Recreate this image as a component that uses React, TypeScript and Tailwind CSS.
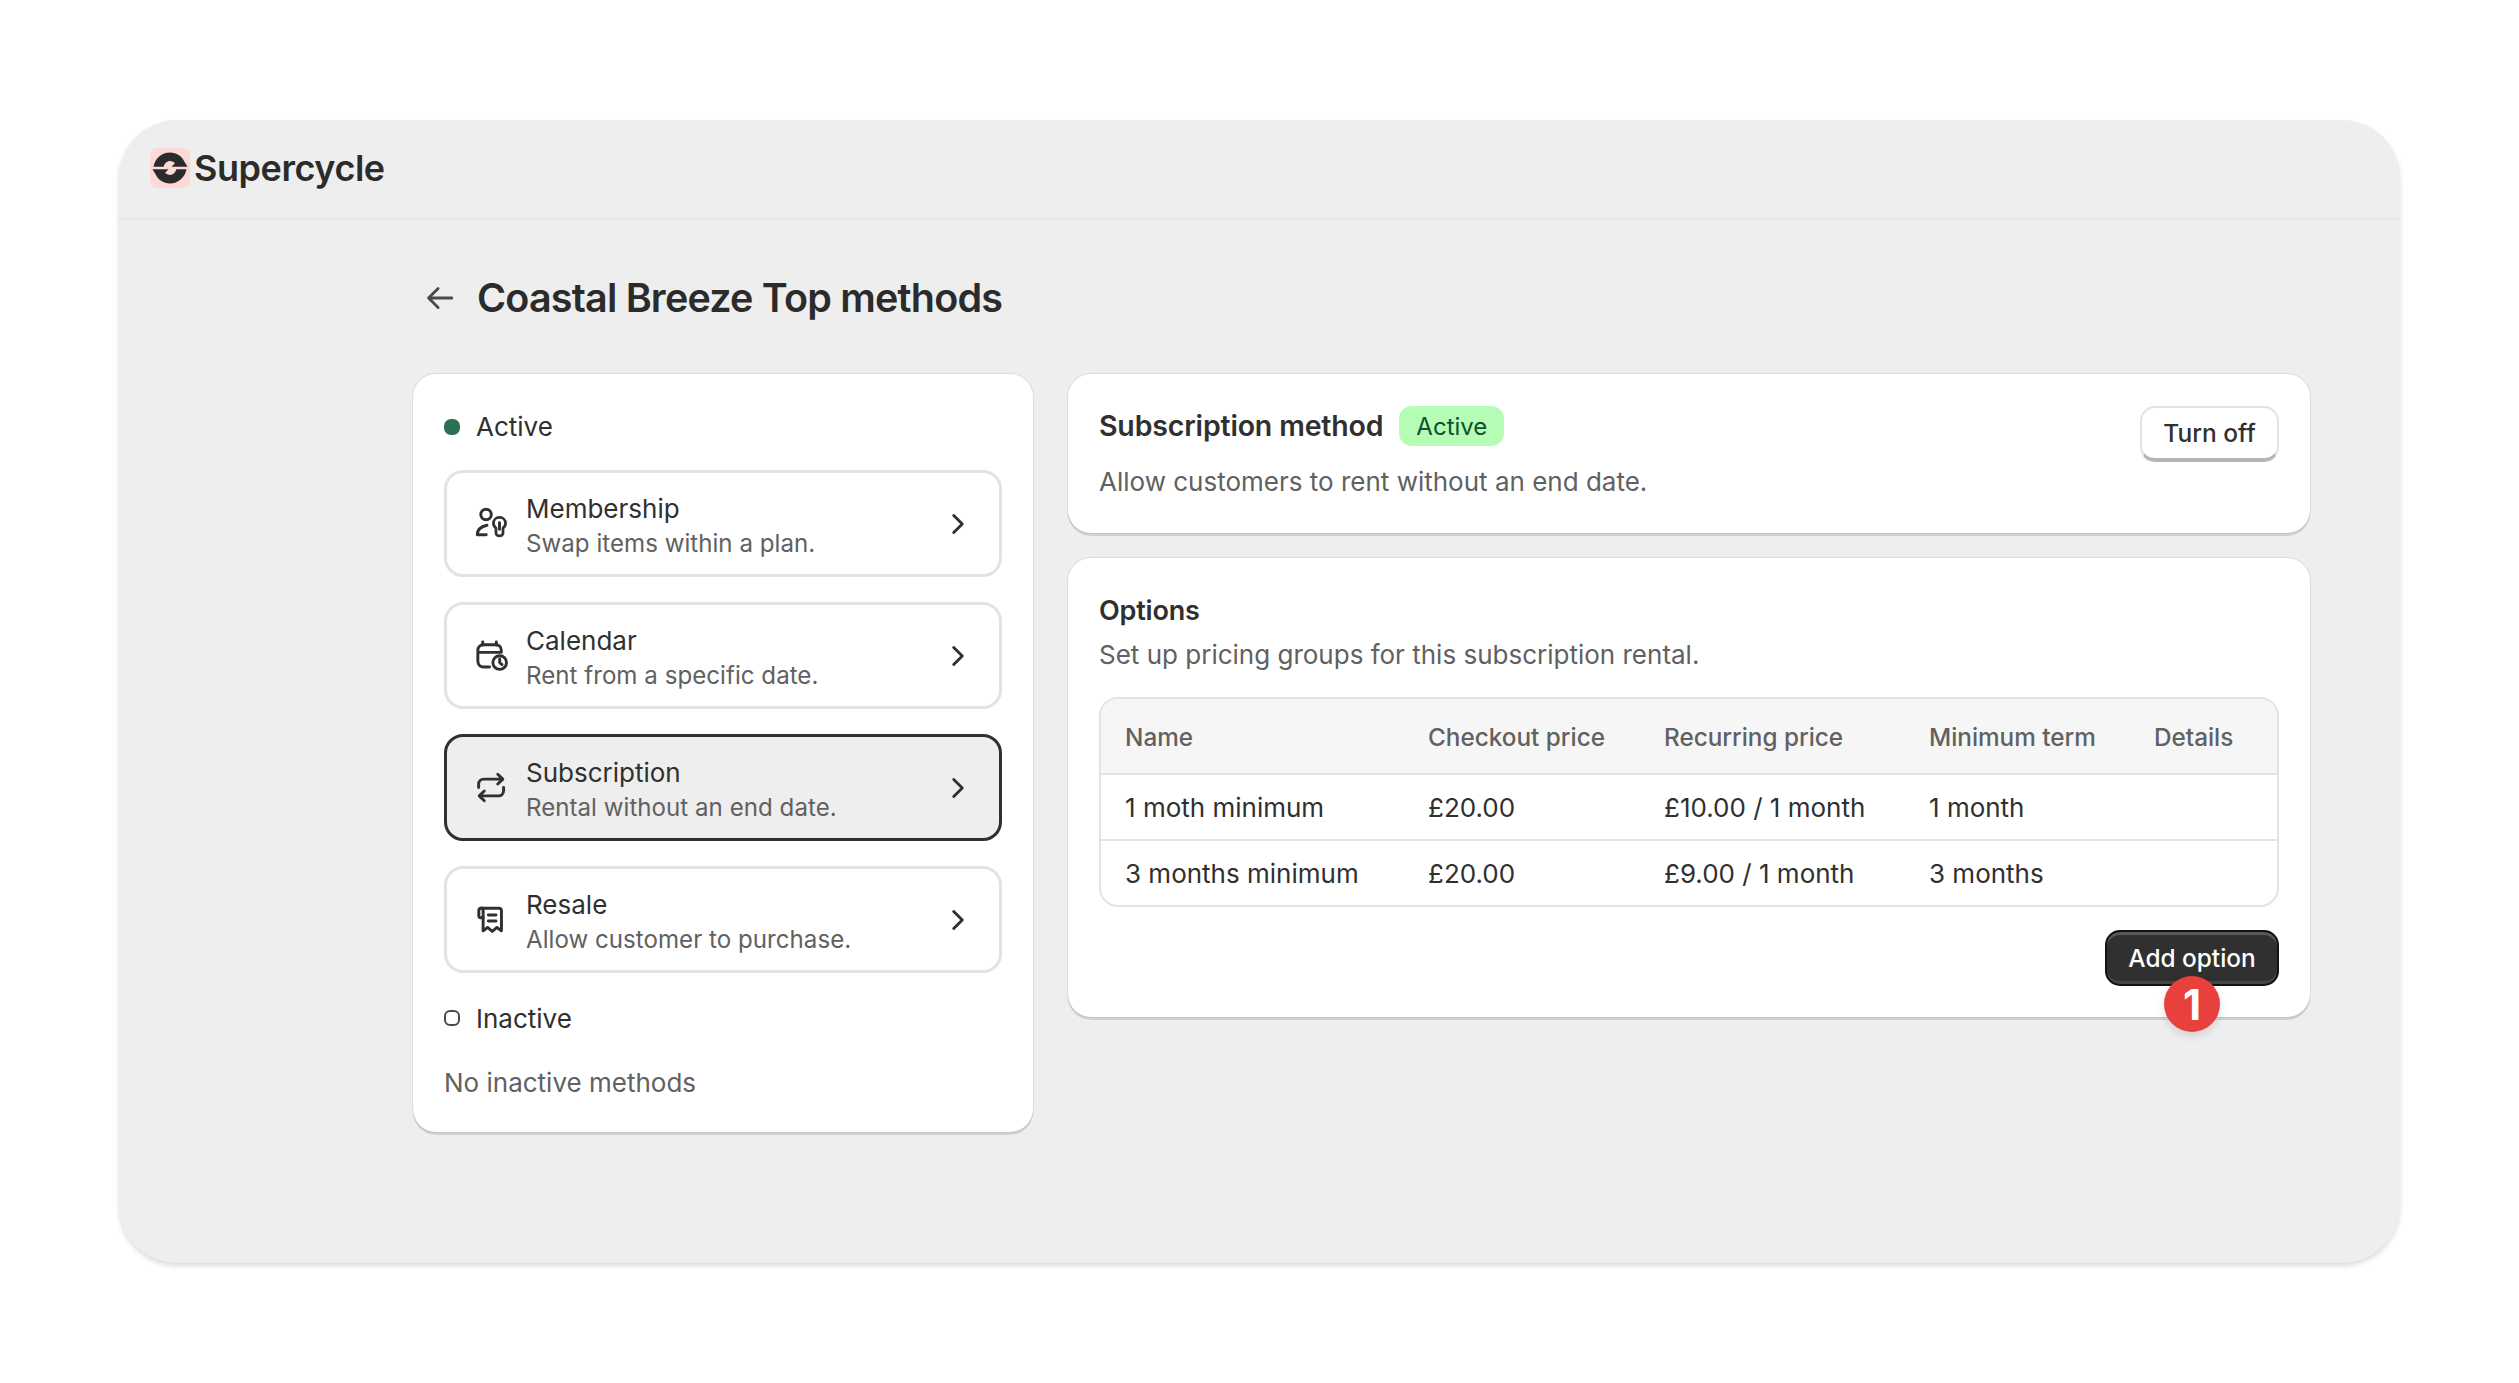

const Chevron = () => (
  <svg viewBox="0 0 20 20" className="w-[38px] h-[38px] shrink-0" fill="none" stroke="#303030" strokeWidth="1.5" strokeLinecap="round" strokeLinejoin="round">
    <path d="M7.75 5.5 12.25 10l-4.5 4.5" />
  </svg>
);

const icons: Record<string, JSX.Element> = {
  membership: (
    <>
      <circle cx="7.2" cy="5.4" r="2.7" />
      <path d="M2.7 15.8h4.6M2.7 15.8c0-2.6 1.7-4.2 5-4.9" />
      <path d="M14.1 6.9c-1.8 0-3.1 1.3-3.1 3 0 1.1.5 1.9 1.3 2.5v2.6c0 .7.8 1.4 1.8 1.4s1.8-.7 1.8-1.4v-2.6c.8-.6 1.3-1.4 1.3-2.5 0-1.7-1.3-3-3.1-3Z" strokeWidth="1.4" />
      <path d="M14.1 9.6v3.4" />
    </>
  ),
  calendar: (
    <>
      <path d="M5.5 3v1.6M12.5 3v1.6" />
      <path d="M9 15.9H6c-1.8 0-3-1.1-3-2.9V7.4c0-1.7 1.2-2.9 3-2.9h6.2c1.6 0 2.8 1.1 2.8 2.7v1M3.2 8.4H15" />
      <circle cx="14.2" cy="13.6" r="3.5" fill="#fff" />
      <path d="M14.2 11.8v1.9l1.2 1" />
    </>
  ),
  subscription: (
    <>
      <path d="M3.4 10V8.3c0-1.5 1.2-2.6 2.6-2.6h9.6" />
      <path d="M13.2 3.2 15.8 5.7 13.2 8.2" />
      <path d="M16.2 10v1.7c0 1.5-1.2 2.6-2.6 2.6H3.9" />
      <path d="M6.3 11.8 3.7 14.3l2.6 2.5" />
    </>
  ),
  resale: (
    <>
      <path d="M5.6 4.2h-1c-.7 0-1.1.4-1.1 1v2.9c0 .6.4 1 1 1h1.2" />
      <path d="M4.6 4.2h9.2c.8 0 1.3.5 1.3 1.2v10.4l-2.3-1.7-2.4 2-2.4-2-2.3 1.7V5.2c0-.6-.4-1-1.1-1Z" />
      <path d="M8.4 7.7h3.9M8.4 10.8h3.9" />
    </>
  ),
};

const Icon = ({ name }: { name: string }) => (
  <svg viewBox="0 0 20 20" className="w-[39px] h-[39px] shrink-0" fill="none" stroke="#303030" strokeWidth="1.5" strokeLinecap="round" strokeLinejoin="round">
    {icons[name]}
  </svg>
);

const Method = ({ icon, title, sub, active }: { icon: string; title: string; sub: string; active?: boolean }) => (
  <div
    className={
      "h-[107px] rounded-[19px] flex items-center pl-[25px] pr-[22px] " +
      (active ? "bg-[#eeeeee] border-[3px] border-[#303030]" : "bg-white border-[3px] border-[#e3e3e3]")
    }
  >
    <Icon name={icon} />
    <div className="ml-[15px] flex-1 pt-[6px]">
      <div className="text-[26px] leading-[35px] text-[#303030]">{title}</div>
      <div className="text-[24.1px] leading-[36px] text-[#616161] tracking-[0.03px]">{sub}</div>
    </div>
    <Chevron />
  </div>
);

const cardClass =
  "bg-white rounded-[23px] shadow-[0_3px_0_0_rgba(26,26,26,0.13),0_0_0_1px_rgba(204,204,204,0.5)]";

const rows = [
  ["1 moth minimum", "£20.00", "£10.00 / 1 month", "1 month"],
  ["3 months minimum", "£20.00", "£9.00 / 1 month", "3 months"],
];

const gridCols = "grid grid-cols-[303px_236px_265px_225px_1fr] items-center pl-[24px]";

export default function App() {
  return (
    <div className="min-h-screen bg-white pt-[120px] pl-[119px] font-['Inter',sans-serif] text-[26px] text-[#303030]">
      <div className="w-[2281px] h-[1143px] rounded-[58px] bg-[#eeeeee] shadow-[0_3px_5px_rgba(0,0,0,0.14)] overflow-hidden">
        <header className="h-[100px] border-b-[2px] border-[#e8e8e8] flex items-center pl-[31px]">
          <div className="w-[40px] h-[40px] rounded-[7px] bg-[#fcd9d7] flex items-center justify-center -mt-[2px]">
            <svg viewBox="0 0 40 40" className="w-[40px] h-[40px]">
              <g fill="#2b2b2b">
                <path d="M3.5 18.7C5 10.5 11.8 4.5 20 4.5c6.4 0 11.8 3.6 14.3 8.9l3.2 5.3H21.5l3.4-3.4c-1.3-1.4-3-2.2-4.9-2.2-3 0-5.5 2.3-6.3 5.6Z" />
                <path d="M3.5 18.7C5 10.5 11.8 4.5 20 4.5c6.4 0 11.8 3.6 14.3 8.9l3.2 5.3H21.5l3.4-3.4c-1.3-1.4-3-2.2-4.9-2.2-3 0-5.5 2.3-6.3 5.6Z" transform="rotate(180 20 20)" />
              </g>
            </svg>
          </div>
          <span className="ml-[4px] -mt-[3px] text-[36px] font-semibold tracking-[-0.45px] text-[#2b2b2b]">Supercycle</span>
        </header>

        <main className="pl-[294px] pr-[90px] pt-[55px]">
          <div className="flex items-center h-[48px] mb-[51px]">
            <svg viewBox="0 0 20 20" className="w-[38px] h-[38px] ml-[8px] -mt-[2px]" fill="none" stroke="#4a4a4a" strokeWidth="1.5" strokeLinecap="round" strokeLinejoin="round">
              <path d="M16.2 10H4M9 5 4 10l5 5" />
            </svg>
            <h1 className="ml-[18px] text-[39.5px] font-semibold tracking-[-0.8px] text-[#2b2b2b]">Coastal Breeze Top methods</h1>
          </div>

          <div className="flex items-start gap-[35px]">
            <section className={cardClass + " w-[620px] h-[758px] p-[31px] pt-[30px]"}>
              <div className="flex items-center h-[42px] mb-[24px] pt-[3px]">
                <span className="w-[16px] h-[16px] rounded-[7px] bg-[#2a7052]" />
                <span className="ml-[16px]">Active</span>
              </div>
              <div className="flex flex-col gap-[25px]">
                <Method icon="membership" title="Membership" sub="Swap items within a plan." />
                <Method icon="calendar" title="Calendar" sub="Rent from a specific date." />
                <Method icon="subscription" title="Subscription" sub="Rental without an end date." active />
                <Method icon="resale" title="Resale" sub="Allow customer to purchase." />
              </div>
              <div className="flex items-center h-[36px] mt-[27px]">
                <span className="w-[16px] h-[16px] rounded-[6px] border-[2px] border-[#4a4a4a]" />
                <span className="ml-[16px]">Inactive</span>
              </div>
              <div className="mt-[29px] leading-[36px] text-[#616161]">No inactive methods</div>
            </section>

            <div className="flex-1 flex flex-col gap-[24px]">
              <section className={cardClass + " h-[159px] px-[31px] pt-[32px] flex justify-between items-start"}>
                <div>
                  <div className="flex items-center h-[40px]">
                    <span className="text-[28.5px] font-semibold tracking-[-0.17px]">Subscription method</span>
                    <span className="ml-[16px] h-[40px] pt-[2px] px-[17px] rounded-[13px] bg-[#b5fcb4] text-[#0c5132] text-[24px] flex items-center">Active</span>
                  </div>
                  <p className="mt-[18px] leading-[36px] text-[#616161]">Allow customers to rent without an end date.</p>
                </div>
                <button className="h-[56px] w-[139px] rounded-[15px] bg-white text-[#303030] text-[24.5px] font-medium border-[2px] border-[#e3e3e3] border-b-[#b5b5b5] border-b-[4px]">Turn off</button>
              </section>

              <section className={cardClass + " h-[459px] mt-[1px] px-[31px] pt-[35px]"}>
                <h2 className="text-[27px] font-semibold leading-[36px] tracking-[-0.2px]">Options</h2>
                <p className="mt-[8px] leading-[36px] text-[#616161]">Set up pricing groups for this subscription rental.</p>
                <div className="mt-[24px] border-[2px] border-[#e3e3e3] rounded-[19px] overflow-hidden">
                  <div className={gridCols + " h-[74px] pt-[2px] bg-[#f6f6f6] text-[#616161] font-medium text-[24.3px]"}>
                    <span>Name</span>
                    <span>Checkout price</span>
                    <span>Recurring price</span>
                    <span>Minimum term</span>
                    <span>Details</span>
                  </div>
                  {rows.map((r) => (
                    <div key={r[0]} className={gridCols + " h-[66px] border-t-[2px] border-[#e3e3e3]"}>
                      {r.map((c) => (
                        <span key={c}>{c}</span>
                      ))}
                    </div>
                  ))}
                </div>
                <div className="flex justify-end mt-[23px]">
                  <div className="relative">
                    <button className="h-[56px] w-[174px] rounded-[15px] bg-[#303030] text-white text-[24.4px] font-medium border-[2px] border-[#111111] shadow-[inset_0_3px_0_rgba(255,255,255,0.2),inset_0_-3px_0_rgba(255,255,255,0.1)]">Add option</button>
                    <span className="absolute left-[59px] top-[46px] w-[56px] h-[56px] rounded-full bg-[#e8403d] text-white text-[42px] font-bold flex items-center justify-center shadow-[0_4px_8px_rgba(0,0,0,0.12)]">1</span>
                  </div>
                </div>
              </section>
            </div>
          </div>
        </main>
      </div>
    </div>
  );
}
